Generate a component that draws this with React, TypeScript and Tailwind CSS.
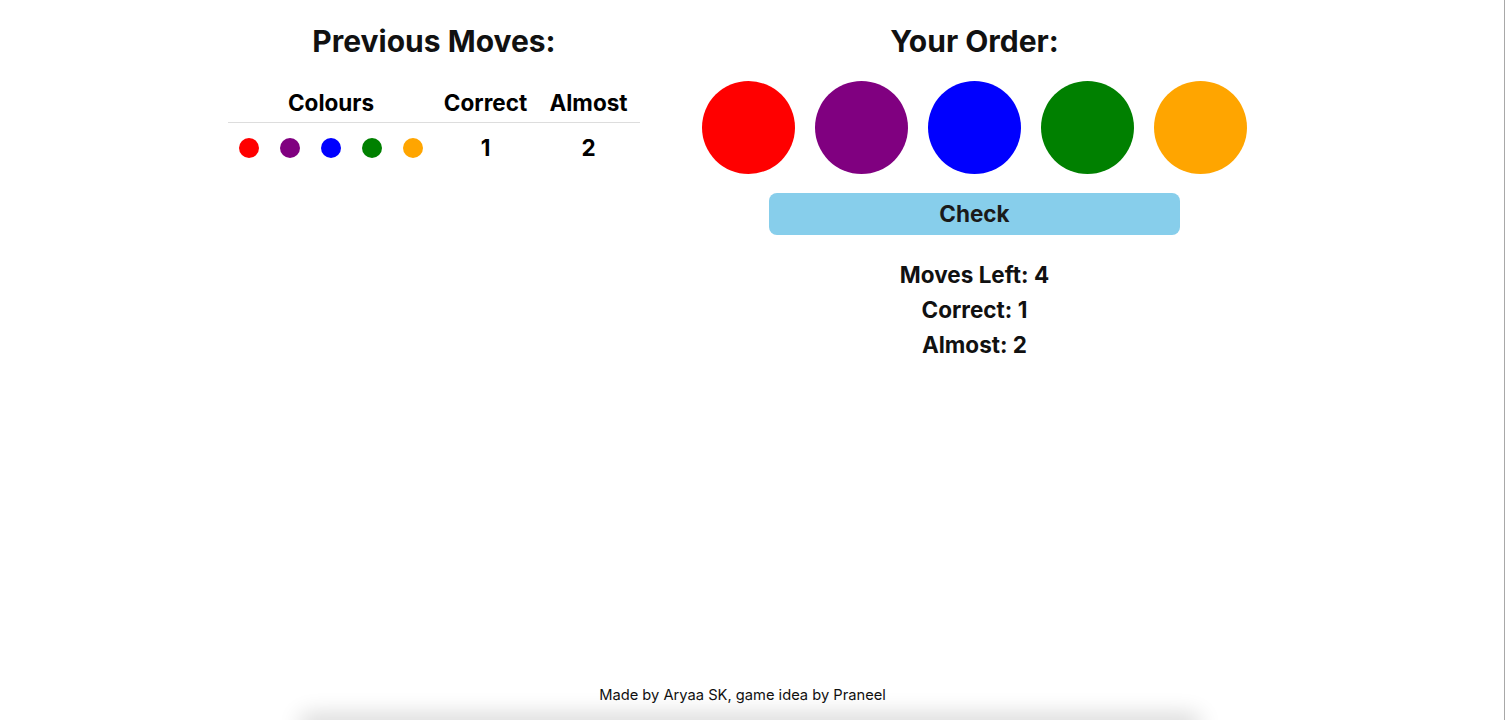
const colours = ["#ff0000", "#800080", "#0000ff", "#008000", "#ffa500"];

const moves = [{ guess: colours, correct: 1, almost: 2 }];

function PreviousMoves() {
  return (
    <section className="w-[412px] flex flex-col items-center">
      <h2 className="text-[30px] font-bold leading-[36px] mt-[23px] text-[#111]">Previous Moves:</h2>
      <table className="w-full mt-[30px] border-collapse">
        <thead>
          <tr className="border-b border-[#dddddd]">
            <th className="w-[206px] text-[22.5px] font-bold h-[33px] align-top leading-[28px]">Colours</th>
            <th className="w-[103px] text-[22.5px] font-bold align-top leading-[28px]">Correct</th>
            <th className="w-[103px] text-[22.5px] font-bold align-top leading-[28px]">Almost</th>
          </tr>
        </thead>
        <tbody>
          {moves.map((m, i) => (
            <tr key={i}>
              <td className="h-[52px]">
                <div className="flex items-center gap-[21px] pl-[11px]">
                  {m.guess.map((c) => (
                    <span key={c} className="w-[20px] h-[20px] rounded-full" style={{ backgroundColor: c }} />
                  ))}
                </div>
              </td>
              <td className="text-center text-[22.5px] font-bold">{m.correct}</td>
              <td className="text-center text-[22.5px] font-bold">{m.almost}</td>
            </tr>
          ))}
        </tbody>
      </table>
    </section>
  );
}

function YourOrder() {
  return (
    <section className="w-[545px] flex flex-col items-center">
      <h2 className="text-[30px] font-bold leading-[36px] mt-[23px] text-[#111]">Your Order:</h2>
      <div className="flex gap-[20px] mt-[22px]">
        {colours.map((c) => (
          <div key={c} className="w-[93px] h-[93px] rounded-full" style={{ backgroundColor: c }} />
        ))}
      </div>
      <button className="w-[411px] h-[42px] mt-[19px] rounded-[8px] bg-[#87ceeb] text-[22.5px] font-bold text-[#1a1a1a]">
        Check
      </button>
      <div className="mt-[22px] flex flex-col items-center text-[22.5px] font-bold leading-[35px] text-[#111]">
        <p>Moves Left: 4</p>
        <p>Correct: 1</p>
        <p>Almost: 2</p>
      </div>
    </section>
  );
}

export default function App() {
  return (
    <div className="h-[720px] w-[1505px] flex overflow-hidden bg-white" style={{ fontFamily: "Inter, 'Noto Sans', sans-serif" }}>
      <div className="w-[1504px] flex flex-col">
        <main className="flex-1 flex pl-[228px] gap-[62px]">
          <PreviousMoves />
          <YourOrder />
        </main>
        <footer className="w-[1485px] text-center text-[14.7px] text-[#111] leading-[20px] pb-[5px]">
          Made by Aryaa SK, game idea by Praneel
        </footer>
        <div className="ml-[305px] w-[890px] h-[10px] rounded-[20px] shadow-[0_0_22px_6px_rgba(0,0,0,0.16)] bg-white translate-y-[10px]" />
      </div>
      <div className="w-px bg-[#a8a8a8]" />
    </div>
  );
}
